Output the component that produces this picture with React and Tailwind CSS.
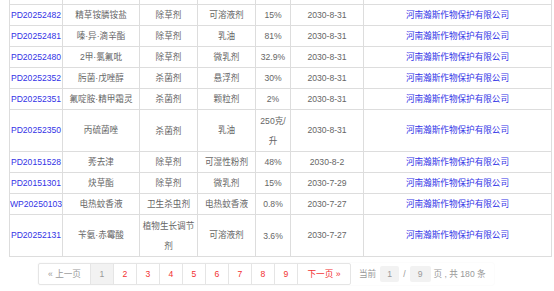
import React from 'react';

const rows = [
  { no: 'PD20252482', name: '精草铵膦铵盐', type: '除草剂', form: '可溶液剂', pct: ['15%'], date: '2030-8-31' },
  { no: 'PD20252481', name: '嗪·异·滴辛酯', type: '除草剂', form: '乳油', pct: ['81%'], date: '2030-8-31' },
  { no: 'PD20252480', name: '2甲·氯氟吡', type: '除草剂', form: '微乳剂', pct: ['32.9%'], date: '2030-8-31' },
  { no: 'PD20252352', name: '肟菌·戊唑醇', type: '杀菌剂', form: '悬浮剂', pct: ['30%'], date: '2030-8-31' },
  { no: 'PD20252351', name: '氟啶胺·精甲霜灵', type: '杀菌剂', form: '颗粒剂', pct: ['2%'], date: '2030-8-31' },
  { no: 'PD20252350', name: '丙硫菌唑', type: '杀菌剂', form: '乳油', pct: ['250克/', '升'], date: '2030-8-31', tall: true },
  { no: 'PD20151528', name: '莠去津', type: '除草剂', form: '可湿性粉剂', pct: ['48%'], date: '2030-8-2' },
  { no: 'PD20151301', name: '炔草酯', type: '除草剂', form: '微乳剂', pct: ['15%'], date: '2030-7-29' },
  { no: 'WP20250103', name: '电热蚊香液', type: '卫生杀虫剂', form: '电热蚊香液', pct: ['0.8%'], date: '2030-7-27' },
  { no: 'PD20252131', name: '苄氨·赤霉酸', type: ['植物生长调节', '剂'], form: '可溶液剂', pct: ['3.6%'], date: '2030-7-27', tall: true },
];

const company = '河南瀚斯作物保护有限公司';
const grid = 'grid grid-cols-[53px_77px_58px_58px_35px_73px_188px]';
const cell = 'flex flex-col items-center justify-center text-center border-r border-[#ddd] overflow-hidden whitespace-nowrap';

const Lines = ({ v }) =>
  (Array.isArray(v) ? v : [v]).map((t, i) => <span key={i} className="block leading-[20px]">{t}</span>);

const Row = ({ r }) => (
  <div className={`${grid} border-b border-[#ddd] ${r.tall ? 'h-[42px]' : 'h-[21px]'}`}>
    <div className={`${cell} text-[#3333e6]`}>{r.no}</div>
    <div className={cell}>{r.name}</div>
    <div className={cell}><Lines v={r.type} /></div>
    <div className={cell}>{r.form}</div>
    <div className={cell}><Lines v={r.pct} /></div>
    <div className={cell}>{r.date}</div>
    <div className={`${cell} text-[#3333e6]`}>{company}</div>
  </div>
);

const PageItem = ({ children, active }) => (
  <div
    className={`flex items-center justify-center h-full w-[23px] border-r border-[#e5e5e5] ${
      active ? 'bg-[#f2f2f2] text-[#999]' : 'text-[#f23030]'
    }`}
  >
    {children}
  </div>
);

export default function App() {
  return (
    <div className="bg-white w-[554px] h-[291px] overflow-hidden text-[8.6px] text-[#666] font-['Liberation_Sans','Noto_Sans_CJK_SC',sans-serif]">
      <div className="ml-[9px] w-[543px] border-l border-[#ddd]">
        <div className={`${grid} h-[5px] border-b border-[#ddd]`}>
          {[0, 1, 2, 3, 4, 5, 6].map((i) => (
            <div key={i} className="border-r border-[#ddd]" />
          ))}
        </div>
        {rows.map((r) => (
          <Row key={r.no} r={r} />
        ))}
      </div>

      <div className="mt-[6px] ml-[38px] flex items-center h-[22px] w-[456px] rounded-[2px] shadow-[0_0_2px_rgba(0,0,0,0.06)]">
        <div className="flex items-center h-full border border-[#e5e5e5] rounded-[2px]">
          <div className="flex items-center justify-center w-[52px] h-full border-r border-[#e5e5e5] text-[#999]">
            « 上一页
          </div>
          <PageItem active>1</PageItem>
          {[2, 3, 4, 5, 6, 7, 8, 9].map((n) => (
            <PageItem key={n}>{n}</PageItem>
          ))}
          <div className="flex items-center justify-center w-[52px] h-full text-[#f23030]">下一页 »</div>
        </div>
        <div className="flex items-center ml-[8px] text-[#999]">
          <span>当前</span>
          <span className="ml-[4px] w-[19px] h-[16px] flex items-center justify-center bg-[#f2f2f2] rounded-[2px]">1</span>
          <span className="mx-[4px]">/</span>
          <span className="w-[21px] h-[16px] flex items-center justify-center bg-[#f2f2f2] rounded-[2px]">9</span>
          <span className="ml-[3px]">页 , 共 180 条</span>
        </div>
      </div>
    </div>
  );
}
